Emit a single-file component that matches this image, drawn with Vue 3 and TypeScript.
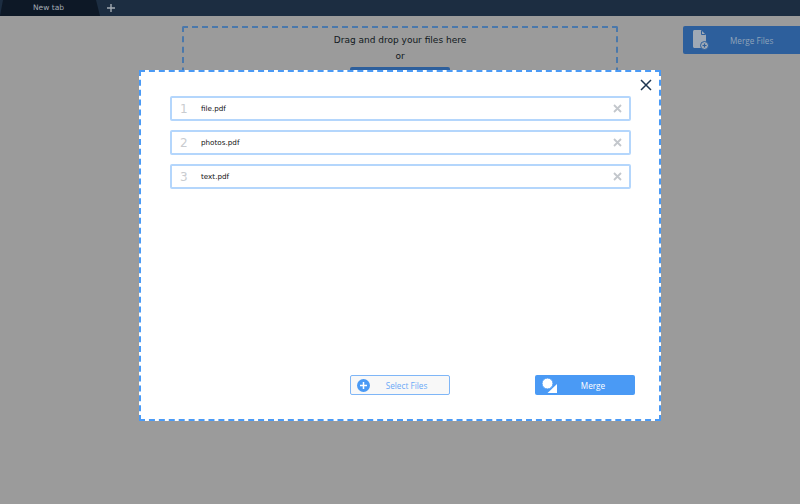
<script setup lang="ts">
const files: string[] = ['file.pdf', 'photos.pdf', 'text.pdf']
</script>

<template>
  <div class="page">
    <header class="topbar">
      <div class="tab">New tab</div>
      <svg class="plus" width="10" height="10" viewBox="0 0 10 10"><path d="M5 1v8M1 5h8" stroke="#a3abb3" stroke-width="1.4" fill="none" /></svg>
    </header>
    <main class="back">
      <div class="drop">
        <div class="drop-line">Drag and drop your files here</div>
        <div class="drop-or">or</div>
        <div class="drop-btn"></div>
      </div>
      <div class="merge-files">
        <svg class="mf-icon" width="16" height="20" viewBox="0 0 16 20">
          <path d="M0 1.5C0 .7.7 0 1.5 0H8l5 5v13H1.500C.7 18 0 17.300 0 16.500z" fill="#9fa9b5" />
          <path d="M8.500 .5v4h4" fill="none" stroke="#2d5f9c" stroke-width="1" />
          <circle cx="11.500" cy="15.500" r="4" fill="#9fa9b5" stroke="#2d5f9c" stroke-width="1" />
          <path d="M11.500 13.500v4M9.500 15.500h4" stroke="#2d5f9c" stroke-width="1.200" />
        </svg>
        <span class="mf-text">Merge Files</span>
      </div>
    </main>

    <section class="modal">
      <button class="close" type="button" aria-label="Close">
        <svg width="12" height="12" viewBox="0 0 12 12"><path d="M1 1l10 10M11 1L1 11" stroke="#1d3550" stroke-width="1.500" fill="none" /></svg>
      </button>
      <ul class="list">
        <li v-for="(f, i) in files" :key="f" class="row">
          <span class="num">{{ i + 1 }}</span>
          <span class="name">{{ f }}</span>
          <svg class="rm" width="9" height="9" viewBox="0 0 9 9"><path d="M1 1l7 7M8 1L1 8" stroke="#c3c7cc" stroke-width="1.800" fill="none" /></svg>
        </li>
      </ul>
      <div class="actions">
        <button class="btn select" type="button">
          <svg class="ico" width="13" height="13" viewBox="0 0 13 13"><circle cx="6.500" cy="6.500" r="6.500" fill="#4a9af5" /><path d="M6.500 3v7M3 6.500h7" stroke="#fff" stroke-width="1.500" /></svg>
          <span>Select Files</span>
        </button>
        <button class="btn merge" type="button">
          <svg class="ico" width="15" height="15" viewBox="0 0 15 15"><path d="M15 6v9H5.500z" fill="#fff" /><circle cx="5.500" cy="5.500" r="5.500" fill="#fff" stroke="#4a9af5" stroke-width="1" /></svg>
          <span>Merge</span>
        </button>
      </div>
    </section>
  </div>
</template>

<style>
html, body { margin: 0; }
</style>

<style scoped>
.page {
  position: relative;
  width: 800px;
  height: 504px;
  overflow: hidden;
  background: #9b9b9b;
  font-family: "DejaVu Sans", sans-serif;
}
.topbar {
  height: 16px;
  background: #1c2d41;
  display: flex;
  align-items: center;
}
.tab {
  width: 100px;
  height: 16px;
  box-sizing: border-box;
  padding-left: 33px;
  background: #0d1826;
  clip-path: polygon(3px 0, 96px 0, 100px 100%, 0 100%);
  color: #a3abb3;
  font-size: 7.500px;
  line-height: 16px;
}
.plus { margin-left: 6px; }
.back {
  display: flex;
  align-items: flex-start;
  padding: 10px 0 0 182px;
}
.drop {
  width: 436px;
  height: 120px;
  box-sizing: border-box;
  border: 2px dashed #4a78ab;
  border-radius: 2px;
  text-align: center;
  font-size: 9px;
  color: #101820;
}
.drop-line { margin-top: 4px; line-height: 16px; }
.drop-or { line-height: 16px; }
.drop-btn {
  width: 100px;
  height: 24px;
  margin: 3px auto 0;
  border-radius: 2px;
  background: #2d5f9c;
}
.merge-files {
  margin-left: 65px;
  width: 117px;
  height: 28px;
  box-sizing: border-box;
  background: #2d5f9c;
  border-radius: 2px 0 0 2px;
  display: flex;
  align-items: center;
  padding-left: 10px;
  color: #8fa3b9;
  font: 8.200px "Open Sans", sans-serif;
}
.mf-icon { flex: none; }
.mf-text { margin-left: 21px; }
.modal {
  position: absolute;
  left: 139px;
  top: 70px;
  width: 522px;
  height: 351px;
  box-sizing: border-box;
  padding: 24px 28px 0 29px;
  background: #fff;
  border: 2px dashed #4a9af5;
  display: flex;
  flex-direction: column;
}
.close {
  position: absolute;
  right: 7px;
  top: 7px;
  width: 12px;
  height: 12px;
  padding: 0;
  border: 0;
  background: none;
  line-height: 0;
}
.list {
  list-style: none;
  margin: 0;
  padding: 0;
  display: flex;
  flex-direction: column;
  gap: 9px;
}
.row {
  height: 25px;
  box-sizing: border-box;
  border: 2px solid #b4d6fc;
  border-radius: 2px;
  display: flex;
  align-items: center;
  padding: 0 7px 0 8px;
}
.num {
  width: 21px;
  color: #c9ccd0;
  font-size: 12px;
}
.name {
  flex: 1;
  font-size: 7.200px;
  color: #111;
}
.actions {
  margin-top: auto;
  margin-bottom: 24px;
  padding-left: 180px;
  display: flex;
  gap: 85px;
}
.btn {
  flex: none;
  width: 100px;
  height: 20px;
  box-sizing: border-box;
  border-radius: 2px;
  display: flex;
  align-items: center;
  padding: 0 0 0 7px;
  font: 8.200px "Open Sans", sans-serif;
}
.btn span { flex: 1; text-align: center; padding-right: 6px; }
.select {
  padding-left: 6px;
  background: #f8f8f8;
  border: 1px solid #7fb6f7;
  color: #6aa8f7;
}
.merge {
  background: #4a9af5;
  border: 0;
  color: #fff;
}
.ico { flex: none; }
</style>
